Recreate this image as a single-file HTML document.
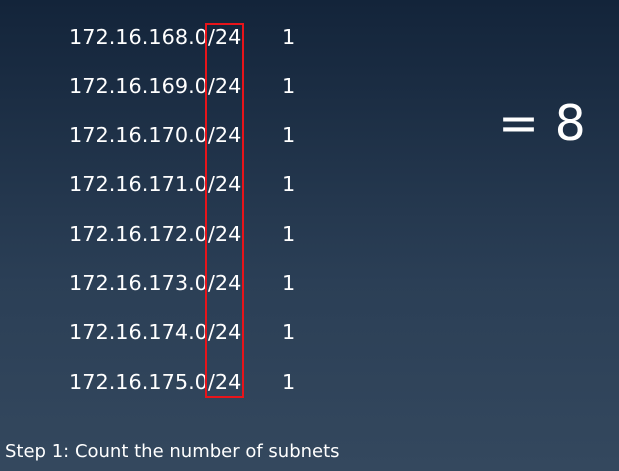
<!DOCTYPE html>
<html><head><meta charset="utf-8"><style>
body{margin:0;width:619px;height:471px;overflow:hidden;background:linear-gradient(#13243a,#2b3f56 60%,#34485e);font-family:"DejaVu Sans",Verdana,sans-serif;color:#fff;position:relative}
.r{position:absolute;left:69px;font-size:20.8px;line-height:24px;white-space:nowrap}
.n{position:absolute;left:282px;font-size:20.8px;line-height:24px}
.box{position:absolute;left:205px;top:23px;width:35px;height:371px;border:2px solid #e8141a}
.eq{position:absolute;left:498px;top:94px;font-size:49px;line-height:60px;white-space:nowrap}
.step{position:absolute;left:5px;top:441px;font-size:18px;line-height:22px;white-space:nowrap}
</style></head><body>
<div class="r" style="top:25px">172.16.168.0/24</div><div class="n" style="top:25px">1</div>
<div class="r" style="top:74px">172.16.169.0/24</div><div class="n" style="top:74px">1</div>
<div class="r" style="top:123px">172.16.170.0/24</div><div class="n" style="top:123px">1</div>
<div class="r" style="top:172px">172.16.171.0/24</div><div class="n" style="top:172px">1</div>
<div class="r" style="top:222px">172.16.172.0/24</div><div class="n" style="top:222px">1</div>
<div class="r" style="top:271px">172.16.173.0/24</div><div class="n" style="top:271px">1</div>
<div class="r" style="top:320px">172.16.174.0/24</div><div class="n" style="top:320px">1</div>
<div class="r" style="top:370px">172.16.175.0/24</div><div class="n" style="top:370px">1</div>
<div class="box"></div>
<div class="eq">= 8</div>
<div class="step">Step 1: Count the number of subnets</div>
</body></html>
